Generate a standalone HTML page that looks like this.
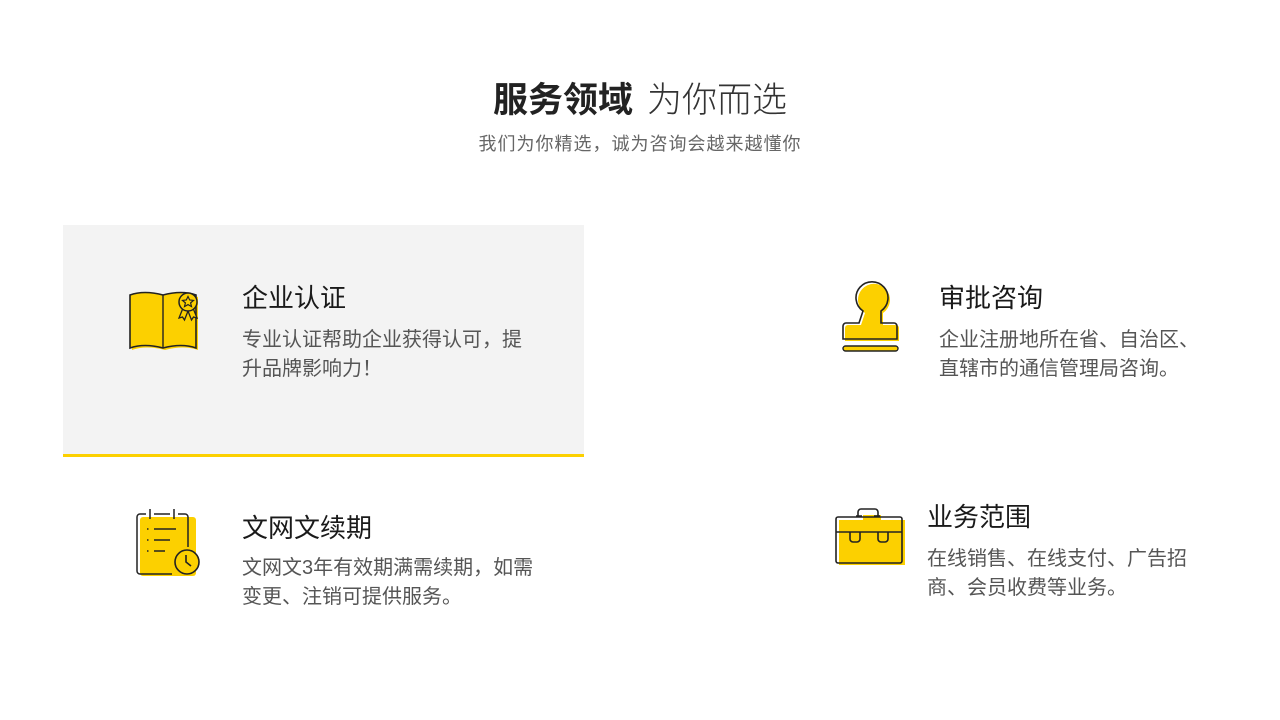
<!DOCTYPE html>
<html><head><meta charset="utf-8"><style>
*{margin:0;padding:0;box-sizing:border-box}
body{width:1280px;height:720px;background:#fff;position:relative;overflow:hidden;font-family:"Liberation Sans","Noto Sans CJK SC",sans-serif}
.a{position:absolute;white-space:nowrap}
.t1{left:0;width:1280px;text-align:center;top:78px;font-size:35px;color:#222;line-height:46px}
.t1 b{font-weight:700}.t1 span{font-weight:300;color:#333;margin-left:14px}
.sub{left:0;width:1280px;text-align:center;top:132px;font-size:18px;letter-spacing:1px;color:#666;line-height:24px}
.card{left:63px;top:225px;width:521px;height:232px;background:#f3f3f3;border-bottom:3px solid #fcd000}
.h{font-size:26px;color:#1a1a1a;line-height:34px}
.d{font-size:20px;color:#555;line-height:29px;white-space:normal}
</style></head><body>
<div class="a t1"><b>服务领域</b><span>为你而选</span></div>
<div class="a sub">我们为你精选，诚为咨询会越来越懂你</div>
<div class="a card"></div>

<svg class="a" style="left:126px;top:290px" width="78" height="64" viewBox="0 0 78 64">
<path d="M4 5 Q18 0 37 5 Q56 0 70 5 V58 Q56 53 37 58 Q18 53 4 58Z" fill="#fcd000" transform="translate(2,2)"/>
<path d="M4 5 Q18 0 37 5 Q56 0 70 5 V58 Q56 53 37 58 Q18 53 4 58Z" fill="#fcd000" stroke="#222" stroke-width="1.6"/>
<path d="M37 5 V58" stroke="#222" stroke-width="1.4"/>
<path d="M57 18 l-4 10 3.5-1 2 3 3.5-9 M67 18 l4 10-3.5-1-2 3-3.5-9" fill="#fcd000" stroke="#222" stroke-width="1.3"/>
<circle cx="62" cy="12" r="9" fill="#fcd000" stroke="#222" stroke-width="1.5"/>
<path d="M62 6.5 l1.7 3.5 3.8.4-2.9 2.5.9 3.7-3.5-2-3.5 2 .9-3.7-2.9-2.5 3.8-.4z" fill="none" stroke="#222" stroke-width="1.2"/>
</svg>
<div class="a h" style="left:242px;top:281px">企业认证</div>
<div class="a d" style="left:242px;top:326px;width:300px">专业认证帮助企业获得认可，提<br>升品牌影响力！</div>

<svg class="a" style="left:840px;top:280px" width="62" height="76" viewBox="0 0 62 76">
<path d="M23 31 A16 16 0 1 1 41 31 V43 h13 a3 3 0 0 1 3 3 v13 h-54 v-13 a3 3 0 0 1 3-3 h13z" fill="#fcd000" transform="translate(2,2)"/>
<path d="M23 31 A16 16 0 1 1 41 31 V43 h13 a3 3 0 0 1 3 3 v13 h-54 v-13 a3 3 0 0 1 3-3 h13z" fill="none" stroke="#222" stroke-width="1.6"/>
<rect x="3" y="66" width="55" height="5" rx="2.5" fill="#fcd000" stroke="#222" stroke-width="1.4"/>
</svg>
<div class="a h" style="left:939px;top:281px">审批咨询</div>
<div class="a d" style="left:939px;top:326px;width:280px">企业注册地所在省、自治区、<br>直辖市的通信管理局咨询。</div>

<svg class="a" style="left:134px;top:508px" width="72" height="72" viewBox="0 0 72 72">
<rect x="6" y="9" width="56" height="59" rx="3" fill="#fcd000"/>
<path d="M12 6 h-6 a3 3 0 0 0-3 3 v54 a3 3 0 0 0 3 3 h32" fill="none" stroke="#222" stroke-width="1.5"/>
<path d="M20 6 h16 M44 6 h7 a3 3 0 0 1 3 3 v30" fill="none" stroke="#222" stroke-width="1.5"/>
<path d="M16 1 v10 M40 1 v10" stroke="#222" stroke-width="1.5"/>
<path d="M13 21 h1.5 M20 21 h22 M13 32 h1.5 M20 32 h16 M13 43 h1.5 M20 43 h11" stroke="#222" stroke-width="1.6"/>
<circle cx="53" cy="54" r="12" fill="#fcd000" stroke="#222" stroke-width="1.6"/>
<path d="M52 47 v7 l5 4" fill="none" stroke="#222" stroke-width="1.6"/>
</svg>
<div class="a h" style="left:242px;top:511px">文网文续期</div>
<div class="a d" style="left:242px;top:554px;width:310px">文网文3年有效期满需续期，如需<br>变更、注销可提供服务。</div>

<svg class="a" style="left:834px;top:505px" width="74" height="66" viewBox="0 0 74 66">
<path d="M26 8 h18 v5 h24 v45 h-66 v-45 h24z" fill="#fcd000" transform="translate(3,2)"/>
<path d="M24 12 v-5 a3 3 0 0 1 3-3 h14 a3 3 0 0 1 3 3 v5" fill="none" stroke="#222" stroke-width="1.6"/>
<path d="M22 11 h6 M40 11 h6" stroke="#222" stroke-width="1.6"/>
<rect x="2" y="12" width="66" height="46" rx="2" fill="none" stroke="#222" stroke-width="1.6"/>
<path d="M2 27 h66 M16 27 v7 a3 3 0 0 0 3 3 h4 a3 3 0 0 0 3-3 v-7 M44 27 v7 a3 3 0 0 0 3 3 h4 a3 3 0 0 0 3-3 v-7" fill="none" stroke="#222" stroke-width="1.6"/>
</svg>
<div class="a h" style="left:927px;top:500px">业务范围</div>
<div class="a d" style="left:927px;top:545px;width:280px">在线销售、在线支付、广告招<br>商、会员收费等业务。</div>
</body></html>
